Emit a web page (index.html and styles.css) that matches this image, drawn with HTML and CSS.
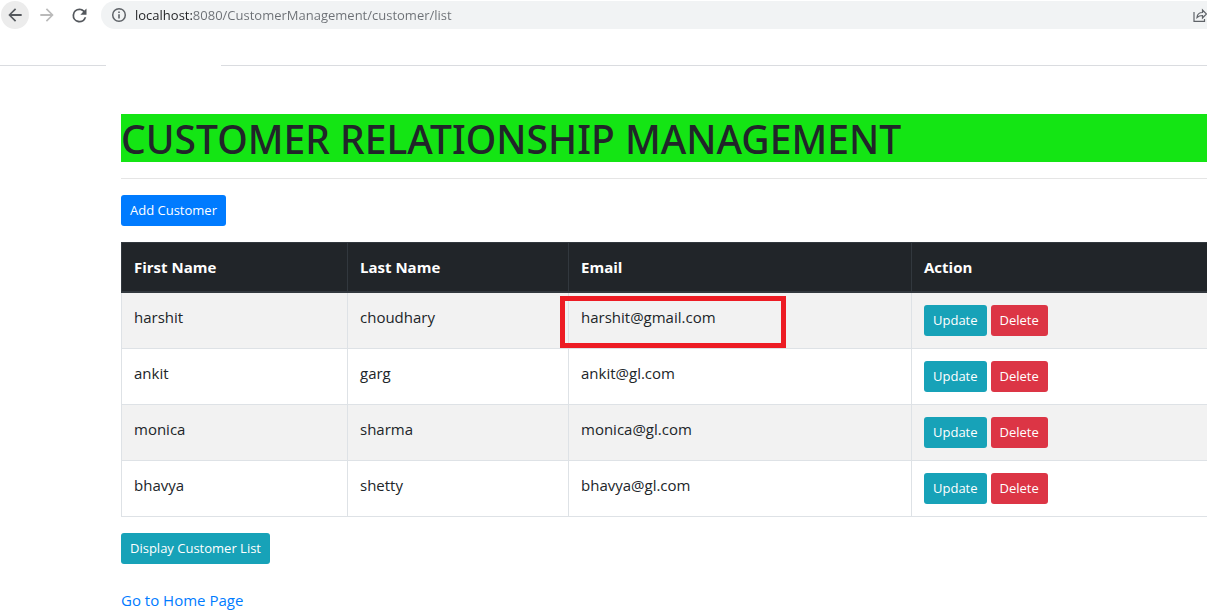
FILE: index.html
```html
<!DOCTYPE html>
<html lang="en">
<head>
<meta charset="utf-8">
<title>Customer Relationship Management</title>
<link rel="stylesheet" href="styles.css">
</head>
<body>
<header class="browser">
  <div class="toolbar">
    <button class="nav-btn nav-btn-active" type="button" aria-label="Back">
      <svg viewBox="0 0 24 24" width="20" height="20"><path d="M20 10.800H7.830l5.590-5.390L12 4l-8 8 8 8 1.410-1.410L7.830 13.200H20z"/></svg>
    </button>
    <button class="nav-btn nav-btn-off" type="button" aria-label="Forward" disabled>
      <svg viewBox="0 0 24 24" width="20" height="20"><path d="M4 13.200h12.170l-5.590 5.390L12 20l8-8-8-8-1.410 1.410L16.170 10.800H4z"/></svg>
    </button>
    <button class="nav-btn" type="button" aria-label="Reload">
      <svg viewBox="0 0 24 24" width="21" height="21"><path d="M17.650 6.350A7.960 7.960 0 0 0 12 4a8 8 0 1 0 7.730 10h-2.080A6 6 0 1 1 12 6c1.660 0 3.140.69 4.220 1.780L13 11h7V4z"/></svg>
    </button>
    <div class="address">
      <svg class="info" viewBox="0 0 16 16" width="16" height="16"><circle cx="8" cy="8" r="6.300" fill="none" stroke="currentColor" stroke-width="1.500"/><path d="M7.200 7.200h1.600v4.200H7.200zM7.200 4.500h1.600v1.600H7.200z"/></svg>
      <input class="url" type="text" aria-label="Address" value="localhost:8080/CustomerManagement/customer/list">
      <button class="share" type="button" aria-label="Share">
        <svg viewBox="0 0 14 14" width="14" height="14"><path d="M1 4v9.300h10.500V11M4 9.500C4.300 6.500 6 4.500 9.500 4.500V2l4 4-4 4V7.500C7 7.500 5.500 8 4 9.500z" fill="none" stroke="currentColor" stroke-width="1.200"/></svg>
      </button>
    </div>
  </div>
  <div class="tab-line"></div>
</header>
<main class="container">
  <h1 class="title">CUSTOMER RELATIONSHIP MANAGEMENT</h1>
  <hr class="rule">
  <button class="btn btn-primary" type="button">Add Customer</button>
  <table class="table">
    <colgroup><col class="col-first"><col class="col-last"><col class="col-email"><col></colgroup>
    <thead>
      <tr><th>First Name</th><th>Last Name</th><th>Email</th><th>Action</th></tr>
    </thead>
    <tbody>
      <tr><td>harshit</td><td>choudhary</td><td class="marked">harshit@gmail.com</td><td><div class="actions"><button class="btn btn-info" type="button">Update</button><button class="btn btn-danger" type="button">Delete</button></div></td></tr>
      <tr><td>ankit</td><td>garg</td><td>ankit@gl.com</td><td><div class="actions"><button class="btn btn-info" type="button">Update</button><button class="btn btn-danger" type="button">Delete</button></div></td></tr>
      <tr><td>monica</td><td>sharma</td><td>monica@gl.com</td><td><div class="actions"><button class="btn btn-info" type="button">Update</button><button class="btn btn-danger" type="button">Delete</button></div></td></tr>
      <tr><td>bhavya</td><td>shetty</td><td>bhavya@gl.com</td><td><div class="actions"><button class="btn btn-info" type="button">Update</button><button class="btn btn-danger" type="button">Delete</button></div></td></tr>
    </tbody>
  </table>
  <button class="btn btn-info" type="button">Display Customer List</button>
  <a class="home" href="#">Go to Home Page</a>
</main>
</body>
</html>
```
FILE: styles.css
```css
* { box-sizing: border-box; }
body {
  margin: 0;
  background: #fff;
  color: #212529;
  font: 400 15px/24px "Open Sans", "Noto Sans", sans-serif;
  overflow-x: hidden;
}
button { font: inherit; }
svg { display: block; fill: currentColor; }

.toolbar {
  display: flex;
  align-items: center;
  gap: 4px;
  padding: 1px 0 0 1px;
}
.nav-btn {
  display: flex;
  align-items: center;
  justify-content: center;
  width: 28px;
  height: 28px;
  padding: 0;
  border: 0;
  border-radius: 50%;
  background: none;
  color: #54585d;
}
.nav-btn-active { background: #ececec; }
.nav-btn-off { color: #bababa; }
.address {
  flex: 1;
  display: flex;
  align-items: center;
  height: 28px;
  margin-left: 4px;
  padding-left: 10px;
  border-radius: 14px 0 0 14px;
  background: #f1f3f4;
  color: #5f6368;
}
.url {
  flex: 1;
  min-width: 0;
  margin-left: 8px;
  padding: 0;
  border: 0;
  outline: 0;
  font: 400 13px/20px "Open Sans", "Noto Sans", sans-serif;
  color: transparent;
  background: linear-gradient(90deg, #202124 57px, #6b6f74 57px);
  -webkit-background-clip: text;
  background-clip: text;
}
.share {
  padding: 0;
  border: 0;
  background: none;
  color: #5f6368;
}
.tab-line {
  height: 37px;
  border-bottom: 1px solid;
  border-image: linear-gradient(90deg, #dadce0 107px, #fff 107px, #fff 222px, #dadce0 222px) 1;
}

.container { padding: 48px 0 0 121px; }
.title {
  margin: 0;
  padding-top: 2px;
  background: #14e514;
  font: 500 39px/46px "Noto Sans", sans-serif;
  white-space: nowrap;
}
.rule {
  margin: 16px 0;
  border: 0;
  border-top: 1px solid #e5e5e5;
}
.btn {
  display: block;
  padding: 4px 8px;
  border: 1px solid transparent;
  border-radius: 3px;
  color: #fff;
  font: 400 13px/21px "Open Sans", "Noto Sans", sans-serif;
  white-space: nowrap;
}
.btn-primary { background: #007bff; }
.btn-info { background: #17a2b8; }
.btn-danger { background: #dc3545; }

.table {
  width: 100%;
  margin: 16px 0;
  table-layout: fixed;
  border-spacing: 0;
}
.col-first { width: 226px; }
.col-last { width: 221px; }
.col-email { width: 343px; }
.table th, .table td {
  padding: 12px;
  border-left: 1px solid #dee2e6;
  text-align: left;
  vertical-align: top;
}
.table td { border-bottom: 1px solid #dee2e6; }
.table th {
  border: solid #32383e;
  border-width: 1px 0 2px 1px;
  background: #212529;
  color: #fff;
  font-weight: 700;
}
.table tbody tr:nth-child(odd) { background: #f2f2f2; }
.actions { display: flex; gap: 4px; }
.marked { position: relative; }
.marked::after {
  content: "";
  position: absolute;
  inset: 3px auto 0 -9px;
  width: 216px;
  border: 5px solid #ed1c24;
}
.home {
  display: inline-block;
  margin-top: 24px;
  color: #007bff;
  text-decoration: none;
}
```
